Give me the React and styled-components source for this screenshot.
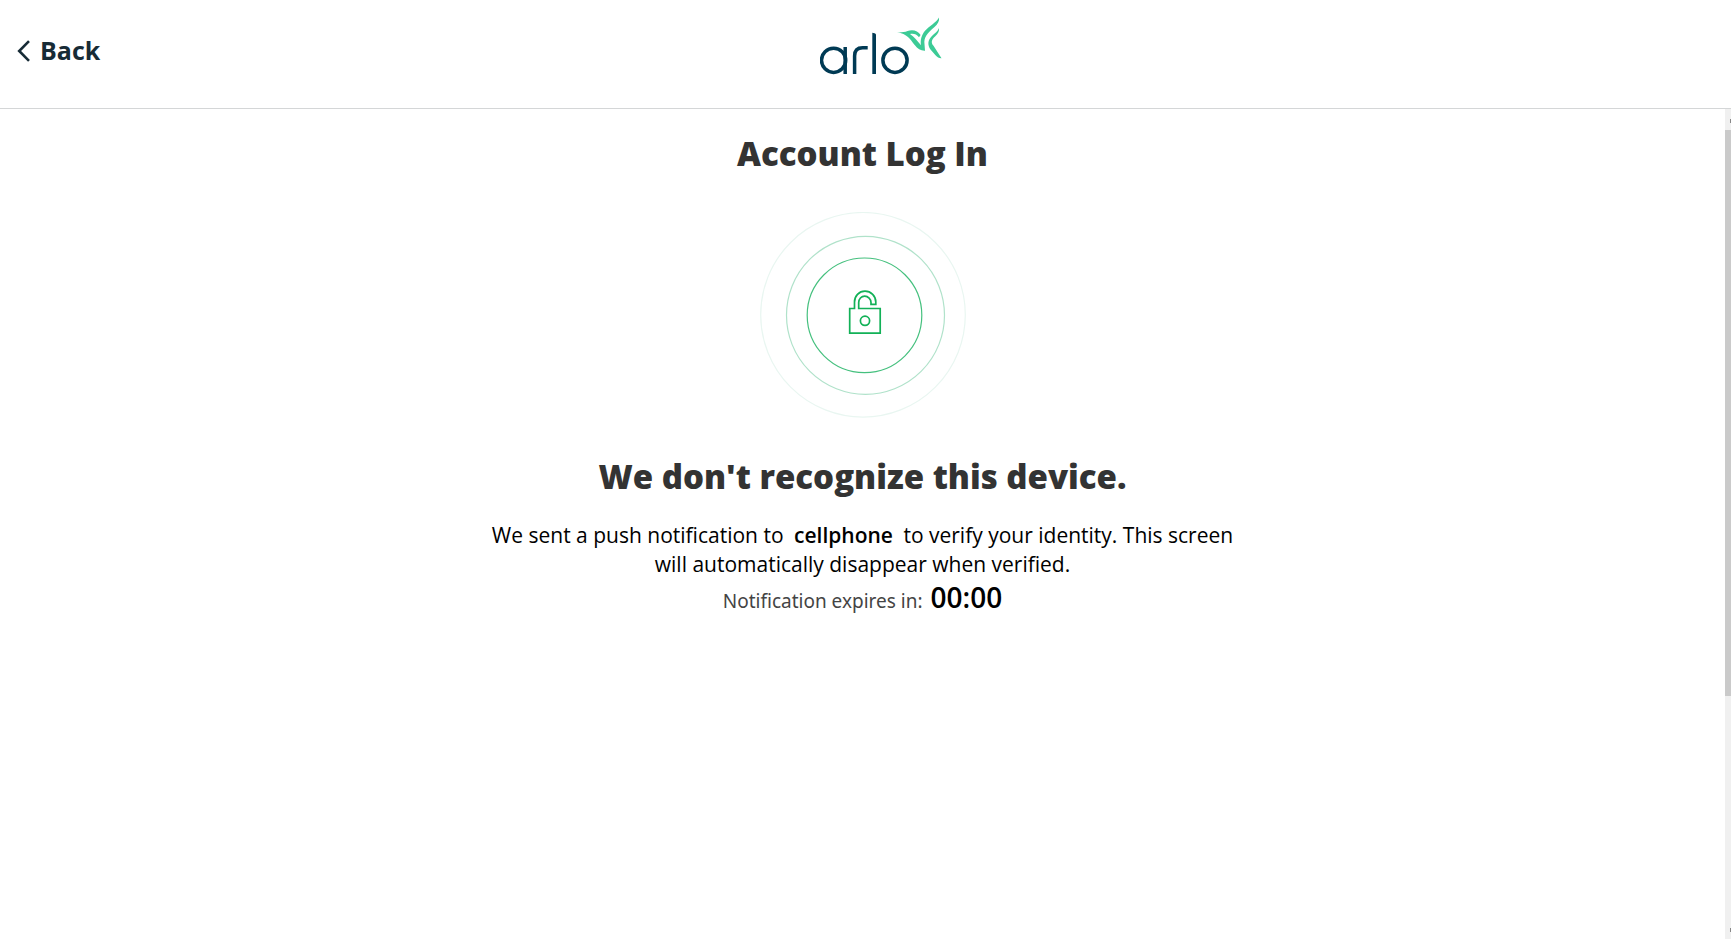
import React from 'react'
import styled, { createGlobalStyle } from 'styled-components';

const App = () => {
  return (
    <Page>
      <GlobalStyle />
      <Header>
        <BackButton type="button">
          <BackArrow />
          Back
        </BackButton>
        <LogoLink href="#" aria-label="Arlo">
          <Logo />
        </LogoLink>
      </Header>
      <Body>
        <Main>
          <Title>Account Log In</Title>
          <UnlockBadge />
          <Title as="h2">We don't recognize this device.</Title>
          <Message>
            We sent a push notification to <Device>cellphone</Device> to verify your identity. This screen will automatically disappear when verified.
          </Message>
          <Expiry>
            Notification expires in: <Timer>00:00</Timer>
          </Expiry>
        </Main>
        <ScrollTrack aria-hidden="true">
          <ScrollArrow />
          <ScrollThumb />
          <ScrollArrow />
        </ScrollTrack>
      </Body>
    </Page>
  )
}

export default App;

const BackArrow = () => (
  <svg width="13" height="24" viewBox="0 -2 13 24" fill="none" stroke="#172b36" strokeWidth="2.6">
    <path d="M12 1.2 2.2 11 12 20.8" />
  </svg>
)

const Logo = () => (
  <svg width="122" height="62" viewBox="0 0 122 62" fill="none">
    <g stroke="#003a54" strokeWidth="3.5">
      <circle cx="13.6" cy="44.3" r="12.1" />
      <path d="M25.2 31v27" />
      <path d="M34.6 58V40c0-5.5 3-8.2 8-8.2h5.1" />
      <circle cx="75" cy="44.3" r="12.1" />
    </g>
    <path d="M52.3 16.7l2.2.6c1 .3 1.5 1 1.5 2V58h-3.7z" fill="#003a54" />
    <g fill="#3ccb96">
      <path d="M77 16.4c4.500.2 7.500-.2 10.500-1.400 5-2 10.500-.5 13.100 3.900l-1.600 2.300c-2.300-3-5.500-4-9-3.200 4.500 3 7.500 7.500 11 11.300-.9-5.500.7-10.500 4-14.500C109 10.300 116 6.800 119 1.500c.6 3.500-1 6.300-4.500 9.500-7.500 6.500-10.800 10.500-10 17l.5 6.700c-4.200.2-7.300-1.700-10.300-5.700-4.500-6-7.500-11.500-17.700-12.600z" />
      <path d="M119 12c.4 3.300-.8 5.600-3.700 8.200-4 3.600-4.500 6.300-1.800 9.600l8 12.400c-2.600.1-4-.7-6-2.900l-4.800-5.600c-3.700-5-2.700-9.700 1-13.500 3.200-3.200 6.200-4.600 7.300-8.200z" />
    </g>
  </svg>
)

const UnlockBadge = () => (
  <Badge width="206" height="206" viewBox="0 0 206 206" fill="none">
    <circle cx="103" cy="102.8" r="102.3" stroke="#e9f6f1" strokeWidth="1.2" />
    <circle cx="105.5" cy="103.3" r="79" stroke="#b0e2ca" strokeWidth="1.2" />
    <circle cx="104.5" cy="103.3" r="57.3" stroke="#45c07e" strokeWidth="1.2" />
    <g stroke="#12b157" strokeWidth="1.7">
      <path d="M94.5 96.5H89.7v24.6h30.5V96.5H98.7v-6c0-3.500 2.600-6.300 6-6.300s6.300 2.800 6.300 6.300v1.900h4.800v-2.400c0-6-4.800-10.800-10.800-10.800s-10.500 4.800-10.500 10.800z" />
      <circle cx="105" cy="108.8" r="4.6" />
    </g>
  </Badge>
)

const GlobalStyle = createGlobalStyle`
* {
box-sizing: border-box;
}
body {
margin: 0;
background: white;
font-family: "Open Sans", sans-serif;
}
`

const Page = styled.div`
display: flex;
flex-direction: column;
min-height: 100vh;
`

const Header = styled.header`
display: grid;
grid-template-columns: 1fr auto 1fr;
height: 109px;
border-bottom: 1px solid #d4d6d7;
`

const BackButton = styled.button`
display: flex;
align-items: center;
justify-self: start;
align-self: start;
gap: 10px;
margin: 31px 0 0 17px;
padding: 0;
border: none;
background: none;
font-family: "Open Sans", sans-serif;
font-size: 25px;
line-height: 38px;
font-weight: 700;
color: #172b36;
cursor: pointer;
`

const LogoLink = styled.a`
padding: 16px 0 0 30px;
`

const Body = styled.div`
display: flex;
flex: 1;
`

const Main = styled.main`
flex: 1;
display: flex;
flex-direction: column;
align-items: center;
padding: 20px;
text-align: center;
`

const Title = styled.h1`
margin: 0;
font-size: 33px;
line-height: 50px;
font-weight: 800;
color: #333;
`

const Badge = styled.svg`
margin: 33px 0 34px;
`

const Message = styled.p`
max-width: 750px;
margin: 19px 0 0;
font-size: 21px;
line-height: 29px;
color: black;
`

const Device = styled.strong`
margin: 0 5px;
font-weight: 600;
`

const Expiry = styled.p`
margin: 0;
font-family: "Noto Sans", sans-serif;
font-size: 19px;
line-height: 36px;
color: #444;
`

const Timer = styled.span`
margin-left: 3px;
font-family: "Open Sans", sans-serif;
font-size: 28px;
font-weight: 600;
color: black;
`

const ScrollTrack = styled.div`
display: flex;
flex-direction: column;
width: 6px;
background: #f0f0f0;
`

const ScrollThumb = styled.div`
flex: 566;
margin-bottom: 222px;
background: #cacaca;
`

const ScrollArrow = styled.span`
flex: none;
height: 21px;
&::after {
content: "";
display: block;
width: 1px;
height: 4px;
margin: 10px 0 0 5px;
background: #888;
}
`
